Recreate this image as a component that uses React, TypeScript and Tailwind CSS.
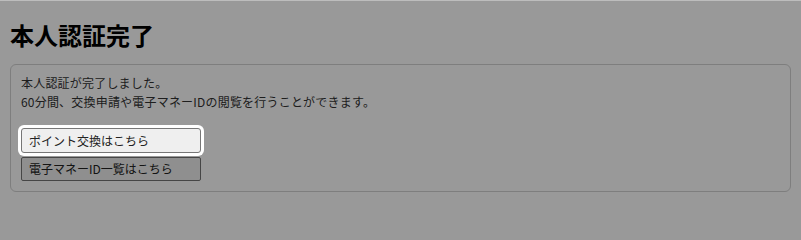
export default function App() {
  return (
    <div
      className="relative h-screen min-h-[200px] w-full overflow-hidden bg-white text-[#333]"
      style={{ fontFamily: '"Noto Sans CJK JP", "Noto Sans", sans-serif' }}
    >
      <div className="px-[10px] pt-[18px]">
        <h1 className="text-[24px] leading-[34px] font-bold text-black">本人認証完了</h1>
        <section className="mt-[12px] rounded-[6px] border border-[#d2d2d2] px-[10px] pt-[8px] pb-[10px]">
          <p className="text-[12px] leading-[19px] tracking-[0.2px]">
            本人認証が完了しました。
            <br />
            60分間、交換申請や電子マネーIDの閲覧を行うことができます。
          </p>
          <div className="mt-[17px] flex flex-col gap-[4px]">
            <button className="relative z-20 h-[25px] w-[180px] rounded-[3px] border border-[#767676] bg-[#efefef] px-[7px] text-left text-[12px] text-[#222] ring-[3px] ring-white">
              ポイント交換はこちら
            </button>
            <button className="h-[24px] w-[180px] rounded-[2px] border border-[#767676] bg-[#efefef] px-[7px] text-left text-[12px] text-[#222]">
              電子マネーID一覧はこちら
            </button>
          </div>
        </section>
      </div>
      <div className="absolute inset-0 z-10 border-t border-[#bdbdbd] bg-black/40" />
    </div>
  );
}
